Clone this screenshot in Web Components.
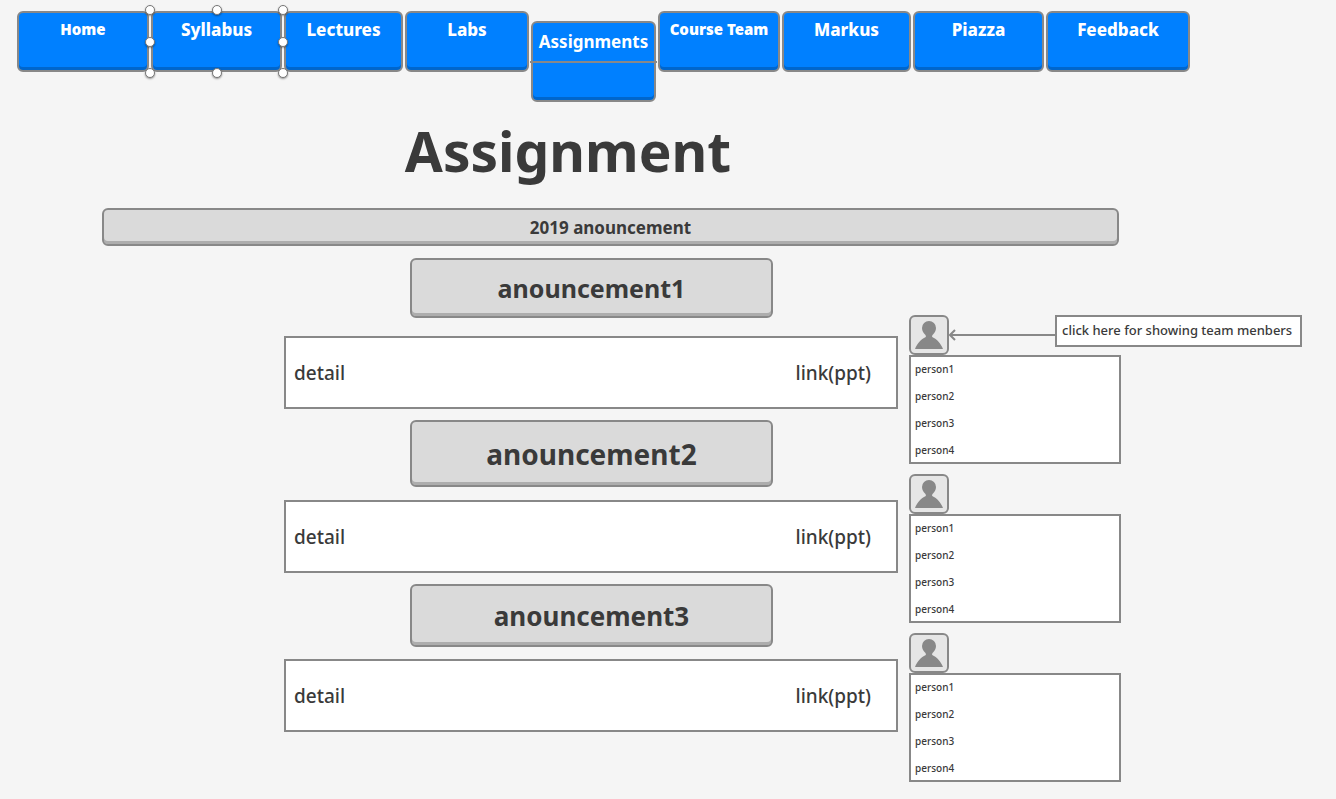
<!DOCTYPE html>
<html lang="en">
<head>
<meta charset="utf-8">
<meta name="viewport" content="width=device-width, initial-scale=1">
<title>Assignment</title>
<style>
  :root {
    --line: #888;
    --ink: #3a3a3a;
    --blue: #0080ff;
    --blue-edge: #0066cc;
    --grey: #dadada;
    --grey-edge: #adadad;
  }
  body {
    margin: 0;
    background: #f5f5f5;
    color: var(--ink);
    font-family: "Noto Sans", "Open Sans", sans-serif;
  }
</style>
</head>
<body>
<course-page></course-page>

<script>
const define = (name, html) => {
  const template = document.createElement('template');
  template.innerHTML = html;
  customElements.define(name, class extends HTMLElement {
    constructor() {
      super();
      this.attachShadow({ mode: 'open' }).append(template.content.cloneNode(true));
    }
  });
};

define('nav-tile', `
<style>
  :host { display: block; position: relative; }
  a {
    display: block; box-sizing: border-box; height: 61px; padding-top: 5px;
    border: 2px solid var(--line); border-radius: 6px;
    background: var(--blue); box-shadow: inset 0 -3px var(--blue-edge);
    color: #fff; font-weight: 800; font-size: 17px; line-height: 24px;
    text-align: center; text-decoration: none; white-space: nowrap;
  }
  :host([small]) a { font-size: 15px; font-weight: 900; line-height: 22px; }
  :host([open]) { margin-top: 10px; }
  :host([open]) a { height: 81px; padding-top: 7px; font-weight: 700; }
  .rule { display: none; }
  :host([open]) .rule {
    display: block; position: absolute; left: -1px; right: -1px; top: 40px;
    height: 2px; background: var(--line);
  }
  .handles { display: none; }
  :host([selected]) { z-index: 1; }
  :host([selected]) .handles {
    position: absolute; inset: -6px;
    display: grid; grid-template-columns: repeat(3, auto);
    justify-content: space-between; align-content: space-between;
    pointer-events: none;
  }
  i {
    box-sizing: border-box; width: 10px; height: 10px; border-radius: 50%;
    background: #fff; border: 1px solid #777; box-shadow: 0 1px 2px #0006;
  }
  i.gap { visibility: hidden; }
</style>
<a href="#"><slot></slot></a>
<span class="rule"></span>
<span class="handles"><i></i><i></i><i></i><i></i><i class="gap"></i><i></i><i></i><i></i><i></i></span>
`);

define('nav-bar', `
<style>
  :host { display: block; padding: 11px 146px 0 17px; }
  nav {
    display: grid; gap: 2px; align-items: start; height: 91px;
    grid-template-columns: 132fr 131fr 119fr 124fr 125fr 122fr 129fr 131fr 144fr;
  }
</style>
<nav aria-label="Course">
  <nav-tile small>Home</nav-tile>
  <nav-tile selected>Syllabus</nav-tile>
  <nav-tile>Lectures</nav-tile>
  <nav-tile>Labs</nav-tile>
  <nav-tile open>Assignments</nav-tile>
  <nav-tile small>Course Team</nav-tile>
  <nav-tile>Markus</nav-tile>
  <nav-tile>Piazza</nav-tile>
  <nav-tile>Feedback</nav-tile>
</nav>
`);

define('grey-button', `
<style>
  :host { display: block; }
  button {
    display: block; box-sizing: border-box; width: 100%; min-height: var(--height, 38px);
    margin: 0; padding: 0 8px; border: 2px solid var(--line); border-radius: 6px;
    background: var(--grey); box-shadow: inset 0 -3px var(--grey-edge);
    color: inherit; font: bold var(--size, 17px)/1 "Noto Sans", sans-serif;
  }
</style>
<button type="button"><slot></slot></button>
`);

define('announcement-item', `
<style>
  :host { display: block; }
  grey-button { width: 363px; margin-left: 126px; }
  .detail {
    display: flex; justify-content: space-between; align-items: center;
    box-sizing: border-box; min-height: 73px; margin-top: var(--gap, 12px);
    padding: 0 25px 0 8px; border: 2px solid var(--line); background: #fff;
    font-size: 19px; font-weight: 500; line-height: 26px;
  }
  a { color: inherit; text-decoration: none; }
</style>
<grey-button><slot></slot></grey-button>
<div class="detail"><span>detail</span><a href="#">link(ppt)</a></div>
`);

define('team-panel', `
<style>
  :host { display: block; }
  .head { display: flex; align-items: flex-start; height: 40px; }
  button {
    display: block; box-sizing: border-box; width: 40px; height: 40px; flex: none;
    margin: 0; padding: 0; border: 2px solid var(--line); border-radius: 6px; background: #e6e6e6;
  }
  svg { display: block; }
  ul {
    display: grid; gap: 12px; box-sizing: border-box; width: 212px;
    margin: 0; padding: 5px 4px 4px; list-style: none;
    border: 2px solid var(--line); background: #fff;
    font-size: 10px; font-weight: 500; line-height: 15px;
  }
</style>
<div class="head">
  <button type="button" aria-label="Show team members" aria-expanded="true" aria-controls="team">
    <svg width="36" height="36" viewBox="0 0 36 36" fill="#888" aria-hidden="true">
      <path d="M18 4a7 7 0 0 1 7 7c0 3-1.500 5-3 6.500-.8.800-1 1.500-.8 2.500 5 2.500 8.300 6 10.800 12H4c2.500-6 5.800-9.500 10.800-12 .2-1 0-1.700-.8-2.500-1.500-1.500-3-3.500-3-6.500a7 7 0 0 1 7-7z"/>
    </svg>
  </button>
  <slot></slot>
</div>
<ul id="team"><li>person1</li><li>person2</li><li>person3</li><li>person4</li></ul>
`);

define('arrow-note', `
<style>
  :host { display: flex; flex: 1; align-items: flex-start; }
  .arrow { display: flex; align-items: center; flex: 1; height: 40px; }
  .arrow svg { flex: none; }
  .shaft { flex: 1; height: 2px; margin-left: -6px; background: var(--line); }
  p {
    box-sizing: border-box; margin: 0; width: 247px; height: 32px;
    padding: 0 5px; border: 2px solid var(--line); background: #fff;
    font-size: 13px; font-weight: 500; line-height: 27px; white-space: nowrap;
  }
</style>
<span class="arrow">
  <svg width="7" height="12" viewBox="0 0 7 12" fill="none" stroke="#888" stroke-width="2" aria-hidden="true"><path d="M6 1 1 6l5 5"/></svg>
  <span class="shaft"></span>
</span>
<p><slot></slot></p>
`);

define('course-page', `
<style>
  :host { display: block; }
  h1 {
    margin: 0 200px 0 0; padding: 11px 0 20px;
    font-size: 55px; font-weight: 700; line-height: 75px; text-align: center;
  }
  .banner { margin: 0 217px 0 102px; }
  main {
    display: grid; grid-template-columns: 614fr 393fr; column-gap: 11px; align-items: start;
    padding: 12px 34px 17px 284px;
  }
  .items { display: grid; gap: 11px; }
  .teams { display: grid; gap: 10px; padding-top: 57px; }
  .one { --height: 60px; --size: 25px; --gap: 18px; }
  .two { --height: 67px; --size: 28px; --gap: 13px; }
  .three { --height: 63px; --size: 26px; }
</style>
<nav-bar></nav-bar>
<h1>Assignment</h1>
<grey-button class="banner">2019 anouncement</grey-button>
<main>
  <div class="items">
    <announcement-item class="one">anouncement1</announcement-item>
    <announcement-item class="two">anouncement2</announcement-item>
    <announcement-item class="three">anouncement3</announcement-item>
  </div>
  <div class="teams">
    <team-panel><arrow-note>click here for showing team menbers</arrow-note></team-panel>
    <team-panel></team-panel>
    <team-panel></team-panel>
  </div>
</main>
`);
</script>
</body>
</html>
